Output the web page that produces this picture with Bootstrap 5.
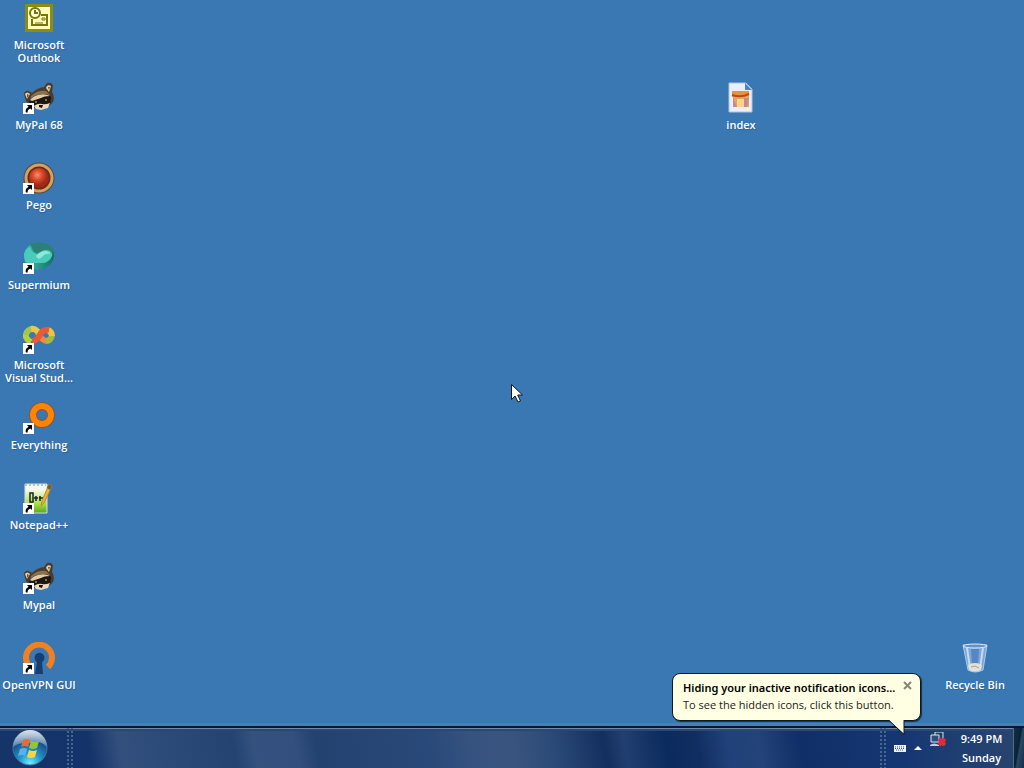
<!DOCTYPE html>
<html lang="en">
<head>
<meta charset="utf-8">
<meta name="viewport" content="width=device-width, initial-scale=1">
<title>Desktop</title>
<link href="https://cdn.jsdelivr.net/npm/bootstrap@5.3.0/dist/css/bootstrap.min.css" rel="stylesheet">
<style>
  body { background: #3978b3; font-family: "Open Sans", "Noto Sans", sans-serif; font-size: 11px; line-height: 13px; cursor: default; }
  .shortcut { width: 78px; height: 80px; padding-top: 2px; color: #fff; font-weight: 600; text-shadow: 1px 1px 1px rgba(20, 50, 90, .3); }
  .shortcut svg { width: 32px; height: 32px; margin-bottom: 4px; }
  .shortcut span { white-space: nowrap; }
  .at-index { left: 702px; top: 80px; }
  .at-bin { right: 10px; bottom: 6px; }
  .pointer { left: 511px; top: 384px; width: 12px; height: 19px; }
  .taskbar { height: 42px; border-top: 2px solid #06173a; color: #fff; font-weight: 600; box-shadow: 0 -3px 0 #4a80b1;
    background: linear-gradient(#6e8e9f 0 1px, #2b476f 1px 3px, transparent 3px),
      linear-gradient(80deg, #15346a 0, #14336a 9%, #33507d 12%, #2c4a77 17%, #244370 23%, #35527f 25%, #334f7d 29%, #244270 31%, #29497a 42%, #36527f 46%, #39557f 50%, #2c4a77 54%, #132f60 59%, #213f70 61%, #0b2a5d 65%, #112e61 68%, #20417a 71%, #234379 74%, #102e67 78%, #14346f 84%, #153674 88%, #1d3d72 92%, #294570 100%); }
  .grip { width: 6px; background: radial-gradient(circle at 1px 1px, #48668c 0 1px, transparent 1px) 0 3px / 4px 4px; }
  .start { width: 60px; }
  .tasks { margin-left: 7px; }
  .clock { width: 63px; line-height: 19px; padding-top: 1px; }
  .peek { width: 11px; border-left: 1px solid #4d6b85; }
  .peek, .peek:hover { background: linear-gradient(100deg, #123044, #0b2238 45%, #284860 55%, #132d4b); }
  .tip { right: 103px; bottom: 47px; width: 249px; height: 48px; padding: 5px 10px; color: #222; font-weight: 400; background: #ffffe3; border: 1px solid #101820; border-radius: 8px; box-shadow: 1px 1px 1px #14304d; line-height: 17px; white-space: nowrap; }
  .tip-title { font-family: "Noto Sans", "Open Sans", sans-serif; font-weight: 600; color: #000; }
  .tip-close { right: 7px; top: 6px; line-height: 0; }
  .tip-tail { right: 14px; top: 46px; }
</style>
</head>
<body class="vh-100 d-flex flex-column overflow-hidden">
<svg class="d-none" aria-hidden="true">
  <symbol id="arrow" viewBox="0 0 11 11"><path fill="#fff" d="M0 0h11v11H0z"/><path d="M4 2h5v5L7.300 5.400Q4.500 6.500 4.500 9.500H3Q1.500 6 5.600 3.700z" fill="#000"/></symbol>
  <symbol id="raccoon" viewBox="0 0 32 32">
    <path d="M1 12q1-4 5-3l3 2q5-5 12-6l3-4q5-1 6 3l-1 6q3 5 1 10l-6 6-7 1-9-2-5-6z" fill="#4b3b2b"/>
    <path d="M2 12q2-3 5 0l-3 5zM23 6q1-4 5-2l-2 6z" fill="#e5d4b2"/>
    <path d="M4 12l2 1-2 3zM25 5l2 0-1 3z" fill="#6d5135"/>
    <path d="M8 14q6-6 15-5l4 4-6 0-8 2-6 5z" fill="#8d7050"/>
    <path d="M6 20q2-6 9-7 9-3 13 2l-1 8-6 2-6-2-7 1z" fill="#1c1713"/>
    <path d="M7 18q3-4 8-5 7-2 12 1-6 0-9 2l-9 3z" fill="#e2cca6"/>
    <path d="M11 24q4-3 8-2 3 1 8-1l-2 5-7 2-5-1z" fill="#eadbbe"/>
    <circle cx="13" cy="20" r="1" fill="#a48d68"/><circle cx="23" cy="18" r="1" fill="#a48d68"/><path d="M16 23h4l-1 3-3-1z" fill="#17110d"/>
  </symbol>
</svg>

<main class="flex-grow-1 position-relative">
  <nav class="d-flex flex-column" aria-label="Desktop shortcuts">
    <a href="#" class="shortcut d-flex flex-column align-items-center text-center text-decoration-none">
      <svg viewBox="0 0 32 32"><path fill="#8d8b10" d="M2 2h28v28H2z"/><path fill="#fffbb8" d="M5 5h22v22H5z"/><g fill="none" stroke="#77750c" stroke-width="2"><path d="M9 17v6h15v-10h-6"/><path d="M19 16h3v2h-3z" stroke-width="1"/><circle cx="12" cy="11" r="5" fill="#fffde0"/><path d="M12 8v3h3"/></g><path d="M12 21h8" stroke="#77750c"/></svg>
      <span>Microsoft<br>Outlook</span>
    </a>
    <a href="#" class="shortcut d-flex flex-column align-items-center text-center text-decoration-none">
      <svg viewBox="0 0 32 32"><use href="#raccoon"/><use href="#arrow" x="0" y="21" width="11" height="11"/></svg>
      <span>MyPal 68</span>
    </a>
    <a href="#" class="shortcut d-flex flex-column align-items-center text-center text-decoration-none">
      <svg viewBox="0 0 32 32"><defs><radialGradient id="pg" cx=".42" cy=".35"><stop offset="0" stop-color="#f59072"/><stop offset=".5" stop-color="#db4a2a"/><stop offset="1" stop-color="#a02a18"/></radialGradient></defs><circle cx="16" cy="16" r="15.500" fill="#5d4a32"/><circle cx="16" cy="16" r="13" fill="#702713" stroke="#cfa266" stroke-width="3"/><circle cx="16" cy="16" r="10" fill="url(#pg)"/><use href="#arrow" x="0" y="21" width="11" height="11"/></svg>
      <span>Pego</span>
    </a>
    <a href="#" class="shortcut d-flex flex-column align-items-center text-center text-decoration-none">
      <svg viewBox="0 0 32 32"><defs><linearGradient id="sm" x2="1"><stop offset="0" stop-color="#3fc5b4"/><stop offset="1" stop-color="#146d61"/></linearGradient></defs><path d="M1 13Q3 1 16 1q14 0 15 11 1 9-9 14l-8 2Q1 23 1 13z" fill="url(#sm)"/><path d="M7 2q9-3 17 0 6 2 7 9-8-5-14-1-5 3-7-2z" fill="#2b8177"/><path d="M1 13q1-6 6-8 2 7 8 7 6-6 12-3 3 2 2 5-3 8-13 7-10 0-14-1z" fill="#4bcbb9"/><path d="M13 14q4-5 10-5 4 1 4 3-5-1-8 3-4 4-6-1z" fill="#8fe8d8"/><use href="#arrow" x="0" y="21" width="11" height="11"/></svg>
      <span>Supermium</span>
    </a>
    <a href="#" class="shortcut d-flex flex-column align-items-center text-center text-decoration-none">
      <svg viewBox="0 0 32 32"><g fill="none" stroke-width="6"><path d="M8 20q-6-3-5-8" stroke="#b8cf38"/><path d="M3 13q1-6 7-6" stroke="#9fc552"/><path d="M8 7q5-1 8 5" stroke="#eac94a"/><path d="M15 11q4 8 9 8" stroke="#f08a3c"/><path d="M23 19q5 0 6-6" stroke="#a9b83f"/><path d="M29 14q0-4-4-6" stroke="#f0c43e"/><path d="M9 19q5 0 8-6 3-6 9-5" stroke="#ea5a34"/></g><use href="#arrow" x="0" y="21" width="11" height="11"/></svg>
      <span>Microsoft<br>Visual Stud...</span>
    </a>
    <a href="#" class="shortcut d-flex flex-column align-items-center text-center text-decoration-none">
      <svg viewBox="0 0 32 32"><circle cx="19" cy="13" r="9" fill="none" stroke="#8c572c" stroke-width="8"/><circle cx="19" cy="13" r="9" fill="none" stroke="#ff8306" stroke-width="6"/><use href="#arrow" x="0" y="21" width="11" height="11"/></svg>
      <span>Everything</span>
    </a>
    <a href="#" class="shortcut d-flex flex-column align-items-center text-center text-decoration-none">
      <svg viewBox="0 0 32 32"><defs><linearGradient id="np" x2="0" y2="1"><stop offset=".2" stop-color="#f5f9ec"/><stop offset=".7" stop-color="#a6db43"/><stop offset="1" stop-color="#58a51c"/></linearGradient></defs><path d="M2 2h22v29H2z" fill="url(#np)" stroke="#d4dfdc"/><path d="M2 3h21" stroke="#b6c3c7" stroke-width="2" stroke-dasharray="2 2"/><path d="M7 11h3v9H7zM13 14v5M11 16h4M17 14v5M16 16h4" fill="none" stroke="#18261d" stroke-width="1.500"/><path d="M26 2l3 2-8 17-3 3 1-5z" fill="#efb332" stroke="#b98c35"/><path d="M26 2l3 2-2 4-3-2z" fill="#765a45"/><use href="#arrow" x="0" y="21" width="11" height="11"/></svg>
      <span>Notepad++</span>
    </a>
    <a href="#" class="shortcut d-flex flex-column align-items-center text-center text-decoration-none">
      <svg viewBox="0 0 32 32"><use href="#raccoon"/><use href="#arrow" x="0" y="21" width="11" height="11"/></svg>
      <span>Mypal</span>
    </a>
    <a href="#" class="shortcut d-flex flex-column align-items-center text-center text-decoration-none">
      <svg viewBox="0 0 32 32"><path d="M7 25A13 13 0 1 1 25 25" fill="none" stroke="#ee8124" stroke-width="6"/><path d="M12 32l2-12a5 5 0 1 1 5 0l1 12z" fill="#173e70"/><use href="#arrow" x="0" y="21" width="11" height="11"/></svg>
      <span>OpenVPN GUI</span>
    </a>
  </nav>

  <a href="#" class="shortcut at-index position-absolute d-flex flex-column align-items-center text-center text-decoration-none">
    <svg viewBox="0 0 32 32"><path d="M4 1h17l6 6v23H4z" fill="#eaf0fb" stroke="#a9c5e9"/><path d="M20 1v7h7z" fill="#4d83c5"/><path d="M7 9h17v6H7z" fill="#ee8f3d"/><path d="M8 13h16v12H8z" fill="#e4a65d"/><path d="M7 13q9 3 17-1" fill="none" stroke="#bd4620" stroke-width="2"/><path d="M12 17h7v8h-7z" fill="#fbd489"/><path d="M8 16l4 9H8zM19 16h5l-2 9h-3z" fill="#c38a8f"/></svg>
    <span>index</span>
  </a>

  <a href="#" class="shortcut at-bin position-absolute d-flex flex-column align-items-center text-center text-decoration-none">
    <svg viewBox="0 0 32 32"><path d="M4 3h24l-4 25q-8 4-15 0z" fill="#7ea5d6" stroke="#adc9e8"/><path d="M8 6l3 20M24 6l-3 20" stroke="#c6daf0" stroke-width="2"/><path d="M12 7h8l-1 14h-6z" fill="#5487c4"/><ellipse cx="16" cy="4" rx="12" ry="2" fill="#6591c6" stroke="#dfeaf4"/><path d="M9 23q7-4 14 0l-1 5q-6 3-12 0z" fill="#e3e1dc"/><path d="M12 25l4-1 4 2" stroke="#b59e80" fill="none"/></svg>
    <span>Recycle Bin</span>
  </a>

  <svg class="pointer position-absolute" viewBox="0 0 12 19" aria-hidden="true"><path d="M.5.500v15l3.500-3.500 3 6 2.500-1-2.800-6h4.800z" fill="#fff" stroke="#0a1a2e"/></svg>
</main>

<footer class="taskbar d-flex flex-shrink-0 position-relative">
  <button type="button" class="start btn p-0 border-0 d-flex justify-content-center align-items-center" aria-label="Start">
    <svg width="36" height="36" viewBox="0 0 36 36"><defs><radialGradient id="orb" cx=".5" cy=".95" r=".9"><stop offset="0" stop-color="#6ef0ff"/><stop offset=".35" stop-color="#2299d0"/><stop offset=".75" stop-color="#17528c"/><stop offset="1" stop-color="#7895b3"/></radialGradient><linearGradient id="gl" x2="0" y2="1"><stop offset="0" stop-color="#d9e5ee"/><stop offset="1" stop-color="#8aa8c4" stop-opacity=".5"/></linearGradient></defs>
      <circle cx="18" cy="18" r="17" fill="url(#orb)" stroke="#4a7399"/><path d="M1 17A17 17 0 0 1 35 17q-5-5-10-5-8 1-12 1-7 0-12 4z" fill="url(#gl)"/>
      <path d="M11 10q4-2 7 0l-2 7q-3-2-7 0z" fill="#ee6a2c"/><path d="M19 11q4 2 8 0l-2 7q-4 2-8 0z" fill="#8fc63d"/><path d="M8 19q4-2 7 0l-2 7q-3-2-7 0z" fill="#55b4ee"/><path d="M17 20q4 2 8 0l-2 7q-4 2-8 0z" fill="#ffd33d"/></svg>
  </button>
  <div class="grip tasks"></div>
  <div class="flex-grow-1"></div>
  <div class="grip me-2"></div>
  <div class="d-flex me-1">
    <button type="button" class="btn p-0 border-0 d-flex align-items-end pb-3 me-2" aria-label="Keyboard"><svg width="12" height="7" viewBox="0 0 12 9" preserveAspectRatio="none"><path d="M0 0h12v9H0z" fill="#eef4fa"/><path d="M1 2.500h10M1 4.500h10M2 6.500h8" stroke="#26416e" stroke-dasharray="1 1"/></svg></button>
    <button type="button" class="btn p-0 border-0 d-flex align-items-center me-2" aria-label="Show hidden icons"><svg width="8" height="4" viewBox="0 0 8 4"><path d="M0 4l4-4 4 4z" fill="#fff"/></svg></button>
    <button type="button" class="btn p-0 border-0 d-flex align-items-start pt-1" aria-label="Network disconnected"><svg width="16" height="16" viewBox="0 0 16 16"><path d="M5 0h8v8H5z" fill="#24406f" stroke="#dfe6f1"/><path d="M1 3h8v7H1z" fill="#304c80" stroke="#dfe6f1"/><path d="M0 13q4-3 9 0v1H0z" fill="#bfcce3"/><path d="M9 7l6 6M15 7l-6 6" stroke="#e22b39" stroke-width="4"/></svg></button>
  </div>
  <div class="clock text-center"><div>9:49 PM</div><div>Sunday</div></div>
  <button type="button" class="peek btn p-0 rounded-0 border-top-0 border-bottom-0 border-end-0" aria-label="Show desktop"></button>

  <div class="tip position-absolute" role="status">
    <div class="tip-title">Hiding your inactive notification icons...</div>
    <div>To see the hidden icons, click this button.</div>
    <button type="button" class="tip-close btn p-0 border-0 position-absolute" aria-label="Close"><svg width="11" height="11" viewBox="0 0 11 11"><path d="M2 2l7 7M9 2l-7 7" stroke="#85857a" stroke-width="2"/></svg></button>
    <svg class="tip-tail position-absolute" width="18" height="16" viewBox="0 0 18 16"><path d="M1 0l15 14V0z" fill="#ffffe3"/><path d="M1 .500l15 14V0" fill="none" stroke="#101820"/></svg>
  </div>
</footer>
<script src="https://cdn.jsdelivr.net/npm/bootstrap@5.3.0/dist/js/bootstrap.bundle.min.js"></script>
</body>
</html>
